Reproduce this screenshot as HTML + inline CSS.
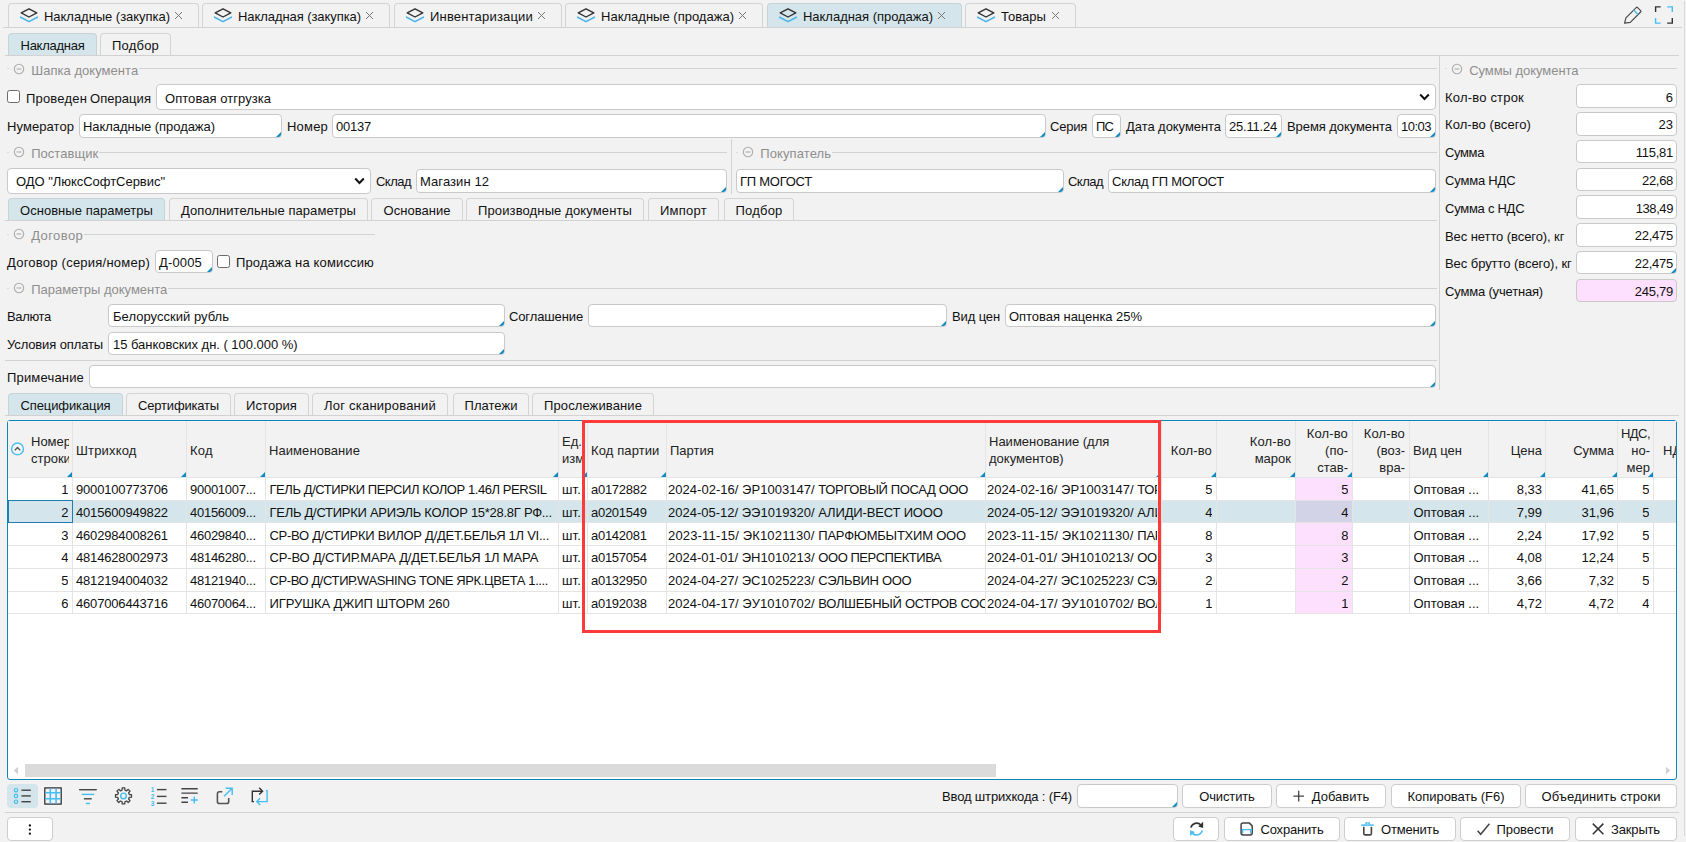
<!DOCTYPE html>
<html lang="ru"><head><meta charset="utf-8"><title>Накладная (продажа)</title>
<style>
*{box-sizing:border-box;margin:0;padding:0}
html,body{width:1686px;height:842px;overflow:hidden;background:#f2f2f2}
body{font-family:"Liberation Sans",sans-serif;font-size:13px;color:#111;position:relative}
.a{position:absolute;white-space:nowrap}
.t{position:absolute;white-space:nowrap;line-height:16px;height:16px}
.inp{position:absolute;background:#fff;border:1px solid #c9c9c9;border-radius:4px;height:23px;line-height:22px;padding-left:3px;padding-top:1px;white-space:nowrap;overflow:hidden}
.inp.r{text-align:right;padding-right:3px;padding-left:0}
.tri{position:absolute;width:0;height:0;border-left:5.5px solid transparent;border-bottom:5.5px solid #1089c1}
.tab{position:absolute;padding-top:1px;border:1px solid #d4d4d4;border-bottom:none;border-radius:4px 4px 0 0;height:23px;line-height:22px;text-align:center;white-space:nowrap;background:#f2f2f2}
.tab.on{background:#d4e6eb;border-color:#c9d3d6}
.hl{position:absolute;height:1px;background:#d2d2d2}
.vl{position:absolute;width:1px;background:#d2d2d2}
.cap{position:absolute;color:#8e8e8e;white-space:nowrap;line-height:16px;background:#f2f2f2;padding:0 1px}
.btn{position:absolute;background:#fff;border:1px solid #cdcdcd;border-radius:4px;height:23px;line-height:20px;text-align:center;white-space:nowrap}
.cb{position:absolute;width:13px;height:13px;border:1px solid #6b6b6b;border-radius:2.5px;background:#fff}
.gh{position:absolute;color:#222;line-height:17px;white-space:nowrap;overflow:hidden}
.gc{position:absolute;height:23px;line-height:22px;white-space:nowrap;overflow:hidden}
</style></head>
<body>
<div class="tab" style="left:8px;top:3px;width:191px;height:24px"></div>
<svg class="a" style="left:19px;top:7px" width="20" height="16" viewBox="0 0 20 16"><path d="M1.6 10.2 L10 14.6 L18.4 10.2" fill="none" stroke="#4db4e8" stroke-width="1.6" stroke-linejoin="round" stroke-linecap="round"></path><path d="M10 1.8 L17.8 5.9 L10 10 L2.2 5.9 Z" fill="none" stroke="#333" stroke-width="1.4" stroke-linejoin="round"></path></svg>
<div class="t" style="left:44px;top:9px"><span style="letter-spacing: -0.035px;">Накладные (закупка)</span></div>
<svg class="a" style="left:174px;top:11px" width="9" height="9" viewBox="0 0 9 9"><path d="M1 1L8 8M8 1L1 8" stroke="#777" stroke-width="1"></path></svg>
<div class="tab" style="left:202px;top:3px;width:188px;height:24px"></div>
<svg class="a" style="left:213px;top:7px" width="20" height="16" viewBox="0 0 20 16"><path d="M1.6 10.2 L10 14.6 L18.4 10.2" fill="none" stroke="#4db4e8" stroke-width="1.6" stroke-linejoin="round" stroke-linecap="round"></path><path d="M10 1.8 L17.8 5.9 L10 10 L2.2 5.9 Z" fill="none" stroke="#333" stroke-width="1.4" stroke-linejoin="round"></path></svg>
<div class="t" style="left:238px;top:9px"><span style="letter-spacing: -0.071px;">Накладная (закупка)</span></div>
<svg class="a" style="left:365px;top:11px" width="9" height="9" viewBox="0 0 9 9"><path d="M1 1L8 8M8 1L1 8" stroke="#777" stroke-width="1"></path></svg>
<div class="tab" style="left:394px;top:3px;width:168px;height:24px"></div>
<svg class="a" style="left:405px;top:7px" width="20" height="16" viewBox="0 0 20 16"><path d="M1.6 10.2 L10 14.6 L18.4 10.2" fill="none" stroke="#4db4e8" stroke-width="1.6" stroke-linejoin="round" stroke-linecap="round"></path><path d="M10 1.8 L17.8 5.9 L10 10 L2.2 5.9 Z" fill="none" stroke="#333" stroke-width="1.4" stroke-linejoin="round"></path></svg>
<div class="t" style="left:430px;top:9px"><span style="letter-spacing: 0.186px;">Инвентаризации</span></div>
<svg class="a" style="left:537px;top:11px" width="9" height="9" viewBox="0 0 9 9"><path d="M1 1L8 8M8 1L1 8" stroke="#777" stroke-width="1"></path></svg>
<div class="tab" style="left:565px;top:3px;width:198px;height:24px"></div>
<svg class="a" style="left:576px;top:7px" width="20" height="16" viewBox="0 0 20 16"><path d="M1.6 10.2 L10 14.6 L18.4 10.2" fill="none" stroke="#4db4e8" stroke-width="1.6" stroke-linejoin="round" stroke-linecap="round"></path><path d="M10 1.8 L17.8 5.9 L10 10 L2.2 5.9 Z" fill="none" stroke="#333" stroke-width="1.4" stroke-linejoin="round"></path></svg>
<div class="t" style="left:601px;top:9px"><span style="letter-spacing: 0.008px;">Накладные (продажа)</span></div>
<svg class="a" style="left:738px;top:11px" width="9" height="9" viewBox="0 0 9 9"><path d="M1 1L8 8M8 1L1 8" stroke="#777" stroke-width="1"></path></svg>
<div class="tab on" style="left:767px;top:3px;width:195px;height:24px"></div>
<svg class="a" style="left:778px;top:7px" width="20" height="16" viewBox="0 0 20 16"><path d="M1.6 10.2 L10 14.6 L18.4 10.2" fill="none" stroke="#4db4e8" stroke-width="1.6" stroke-linejoin="round" stroke-linecap="round"></path><path d="M10 1.8 L17.8 5.9 L10 10 L2.2 5.9 Z" fill="none" stroke="#333" stroke-width="1.4" stroke-linejoin="round"></path></svg>
<div class="t" style="left:803px;top:9px"><span style="letter-spacing: -0.028px;">Накладная (продажа)</span></div>
<svg class="a" style="left:937px;top:11px" width="9" height="9" viewBox="0 0 9 9"><path d="M1 1L8 8M8 1L1 8" stroke="#777" stroke-width="1"></path></svg>
<div class="tab" style="left:965px;top:3px;width:111px;height:24px"></div>
<svg class="a" style="left:976px;top:7px" width="20" height="16" viewBox="0 0 20 16"><path d="M1.6 10.2 L10 14.6 L18.4 10.2" fill="none" stroke="#4db4e8" stroke-width="1.6" stroke-linejoin="round" stroke-linecap="round"></path><path d="M10 1.8 L17.8 5.9 L10 10 L2.2 5.9 Z" fill="none" stroke="#333" stroke-width="1.4" stroke-linejoin="round"></path></svg>
<div class="t" style="left:1001px;top:9px"><span style="letter-spacing: 0.044px;">Товары</span></div>
<svg class="a" style="left:1051px;top:11px" width="9" height="9" viewBox="0 0 9 9"><path d="M1 1L8 8M8 1L1 8" stroke="#777" stroke-width="1"></path></svg>
<div class="hl" style="left:3px;top:27px;width:1679px;"></div>
<div class="vl" style="left:1684px;top:1px;height:835px;background:#d9d9d9"></div>
<div class="tab on" style="left:8px;top:33px;width:89px;height:23px;line-height:21px"><span style="letter-spacing: -0.257px;">Накладная</span></div>
<div class="tab" style="left:100px;top:33px;width:71px;height:23px;line-height:21px"><span style="letter-spacing: 0.203px;">Подбор</span></div>
<div class="hl" style="left:5px;top:55px;width:1674px;"></div>
<div class="hl" style="left:7px;top:68px;width:2px;background:#dcdcdc"></div>
<div class="hl" style="left:32px;top:68px;width:1405px;"></div>
<svg class="a" style="left:13.3px;top:63.2px" width="12" height="12" viewBox="0 0 12 12"><circle cx="6" cy="6" r="4.7" fill="none" stroke="#acacac" stroke-width="1.1"></circle><path d="M3.6 6h4.8" stroke="#acacac" stroke-width="1.1"></path></svg>
<div class="cap" style="left:30.2px;top:63px"><span style="letter-spacing: 0.041px;">Шапка документа</span></div>
<div class="cb" style="left:7px;top:90px"></div>
<div class="t" style="left:26px;top:91px;"><span style="letter-spacing: 0.186px;">Проведен</span></div>
<div class="t" style="left:90px;top:91px;"><span style="letter-spacing: 0.051px;">Операция</span></div>
<div class="inp" style="left:156px;top:84px;width:1280px;height:26px;line-height:26px;padding-left:8px"><span style="letter-spacing: 0.049px;">Оптовая отгрузка</span></div>
<svg class="a" style="left:1419px;top:93px" width="11" height="8" viewBox="0 0 11 8"><path d="M1.2 1.5L5.5 6L9.8 1.5" fill="none" stroke="#111" stroke-width="2"></path></svg>
<div class="t" style="left:7px;top:119px;"><span style="letter-spacing: 0.071px;">Нумератор</span></div>
<div class="inp" style="left:79px;top:114px;width:203px;height:24px;"><span style="letter-spacing: -0.044px;">Накладные (продажа)</span><i class="tri" style="right:0;bottom:0"></i></div>
<div class="t" style="left:287px;top:119px;"><span style="letter-spacing: 0.197px;">Номер</span></div>
<div class="inp" style="left:332px;top:114px;width:714px;height:24px;"><span style="letter-spacing: -0.231px;">00137</span><i class="tri" style="right:0;bottom:0"></i></div>
<div class="t" style="left:1050px;top:119px;"><span style="letter-spacing: -0.231px;">Серия</span></div>
<div class="inp" style="left:1092px;top:114px;width:29px;height:24px;"><span style="letter-spacing: -0.867px;">ПС</span><i class="tri" style="right:0;bottom:0"></i></div>
<div class="t" style="left:1126px;top:119px;"><span style="letter-spacing: -0.057px;">Дата документа</span></div>
<div class="inp" style="left:1225px;top:114px;width:57px;height:24px;"><span style="letter-spacing: -0.205px;">25.11.24</span><i class="tri" style="right:0;bottom:0"></i></div>
<div class="t" style="left:1287px;top:119px;"><span style="letter-spacing: -0.074px;">Время документа</span></div>
<div class="inp" style="left:1397px;top:114px;width:39px;height:24px;"><span style="letter-spacing: -0.509px;">10:03</span><i class="tri" style="right:0;bottom:0"></i></div>
<div class="hl" style="left:7px;top:152px;width:2px;background:#dcdcdc"></div>
<div class="hl" style="left:32px;top:152px;width:695px;"></div>
<svg class="a" style="left:13.3px;top:146.2px" width="12" height="12" viewBox="0 0 12 12"><circle cx="6" cy="6" r="4.7" fill="none" stroke="#acacac" stroke-width="1.1"></circle><path d="M3.6 6h4.8" stroke="#acacac" stroke-width="1.1"></path></svg>
<div class="cap" style="left:30.2px;top:146px"><span style="letter-spacing: 0.036px;">Поставщик</span></div>
<div class="vl" style="left:731px;top:139px;height:55px;"></div>
<div class="hl" style="left:736px;top:152px;width:2px;background:#dcdcdc"></div>
<div class="hl" style="left:761px;top:152px;width:676px;"></div>
<svg class="a" style="left:742.3px;top:146.2px" width="12" height="12" viewBox="0 0 12 12"><circle cx="6" cy="6" r="4.7" fill="none" stroke="#acacac" stroke-width="1.1"></circle><path d="M3.6 6h4.8" stroke="#acacac" stroke-width="1.1"></path></svg>
<div class="cap" style="left:759.2px;top:146px"><span style="letter-spacing: 0.114px;">Покупатель</span></div>
<div class="inp" style="left:7px;top:168px;width:364px;height:26px;line-height:23px;padding-left:8px"><span style="letter-spacing: -0.035px;">ОДО "ЛюксСофтСервис"</span></div>
<svg class="a" style="left:354px;top:177px" width="11" height="8" viewBox="0 0 11 8"><path d="M1.2 1.5L5.5 6L9.8 1.5" fill="none" stroke="#111" stroke-width="2"></path></svg>
<div class="t" style="left:376px;top:174px;"><span style="letter-spacing: -0.525px;">Склад</span></div>
<div class="inp" style="left:416px;top:169px;width:311px;height:24px;"><span style="letter-spacing: 0.078px;">Магазин 12</span><i class="tri" style="right:0;bottom:0"></i></div>
<div class="inp" style="left:736px;top:169px;width:328px;height:24px;"><span style="letter-spacing: -0.252px;">ГП МОГОСТ</span><i class="tri" style="right:0;bottom:0"></i></div>
<div class="t" style="left:1068px;top:174px;"><span style="letter-spacing: -0.525px;">Склад</span></div>
<div class="inp" style="left:1108px;top:169px;width:328px;height:24px;"><span style="letter-spacing: -0.233px;">Склад ГП МОГОСТ</span><i class="tri" style="right:0;bottom:0"></i></div>
<div class="tab on" style="left:8px;top:198px;width:157px;height:23px;line-height:21px"><span style="letter-spacing: 0.039px;">Основные параметры</span></div>
<div class="tab" style="left:169px;top:198px;width:199px;height:23px;line-height:21px"><span style="letter-spacing: 0.062px;">Дополнительные параметры</span></div>
<div class="tab" style="left:371px;top:198px;width:92px;height:23px;line-height:21px"><span style="letter-spacing: 0.035px;">Основание</span></div>
<div class="tab" style="left:466px;top:198px;width:178px;height:23px;line-height:21px"><span style="letter-spacing: 0.127px;">Производные документы</span></div>
<div class="tab" style="left:648px;top:198px;width:71px;height:23px;line-height:21px"><span style="letter-spacing: 0.258px;">Импорт</span></div>
<div class="tab" style="left:724px;top:198px;width:70px;height:23px;line-height:21px"><span style="letter-spacing: 0.203px;">Подбор</span></div>
<div class="hl" style="left:5px;top:220px;width:1432px;"></div>
<div class="hl" style="left:7px;top:234px;width:2px;background:#dcdcdc"></div>
<div class="hl" style="left:32px;top:234px;width:343px;"></div>
<svg class="a" style="left:13.3px;top:228.2px" width="12" height="12" viewBox="0 0 12 12"><circle cx="6" cy="6" r="4.7" fill="none" stroke="#acacac" stroke-width="1.1"></circle><path d="M3.6 6h4.8" stroke="#acacac" stroke-width="1.1"></path></svg>
<div class="cap" style="left:30.2px;top:228px"><span style="letter-spacing: 0.415px;">Договор</span></div>
<div class="t" style="left:7px;top:255px;"><span style="letter-spacing: 0.236px;">Договор (серия/номер)</span></div>
<div class="inp" style="left:155px;top:250px;width:58px;height:23px;"><span style="letter-spacing: 0.156px;">Д-0005</span><i class="tri" style="right:0;bottom:0"></i></div>
<div class="cb" style="left:217px;top:255px"></div>
<div class="t" style="left:236px;top:255px;"><span style="letter-spacing: 0.149px;">Продажа на комиссию</span></div>
<div class="hl" style="left:7px;top:288px;width:2px;background:#dcdcdc"></div>
<div class="hl" style="left:32px;top:288px;width:1405px;"></div>
<svg class="a" style="left:13.3px;top:282.2px" width="12" height="12" viewBox="0 0 12 12"><circle cx="6" cy="6" r="4.7" fill="none" stroke="#acacac" stroke-width="1.1"></circle><path d="M3.6 6h4.8" stroke="#acacac" stroke-width="1.1"></path></svg>
<div class="cap" style="left:30.2px;top:282px"><span style="letter-spacing: -0.016px;">Параметры документа</span></div>
<div class="t" style="left:7px;top:309px;"><span style="letter-spacing: -0.333px;">Валюта</span></div>
<div class="inp" style="left:108px;top:304px;width:397px;height:23px;padding-left:4px;"><span style="letter-spacing: 0.028px;">Белорусский рубль</span><i class="tri" style="right:0;bottom:0"></i></div>
<div class="t" style="left:509px;top:309px;"><span style="letter-spacing: -0.123px;">Соглашение</span></div>
<div class="inp" style="left:588px;top:304px;width:359px;height:23px;"><span></span><i class="tri" style="right:0;bottom:0"></i></div>
<div class="t" style="left:952px;top:309px;"><span style="letter-spacing: -0.121px;">Вид цен</span></div>
<div class="inp" style="left:1005px;top:304px;width:431px;height:23px;"><span style="letter-spacing: -0.042px;">Оптовая наценка 25%</span><i class="tri" style="right:0;bottom:0"></i></div>
<div class="t" style="left:7px;top:337px;"><span style="letter-spacing: -0.127px;">Условия оплаты</span></div>
<div class="inp" style="left:108px;top:332px;width:397px;height:23px;padding-left:4px;"><span style="letter-spacing: -0.031px;">15 банковских дн. ( 100.000 %)</span><i class="tri" style="right:0;bottom:0"></i></div>
<div class="hl" style="left:5px;top:360px;width:1432px;"></div>
<div class="t" style="left:7px;top:370px;"><span style="letter-spacing: 0.175px;">Примечание</span></div>
<div class="inp" style="left:89px;top:365px;width:1347px;height:23px;"><span></span><i class="tri" style="right:0;bottom:0"></i></div>
<div class="vl" style="left:1439px;top:56px;height:334px;"></div>
<div class="hl" style="left:1445px;top:68px;width:2px;background:#dcdcdc"></div>
<div class="hl" style="left:1470px;top:68px;width:207px;"></div>
<svg class="a" style="left:1451.3px;top:63.2px" width="12" height="12" viewBox="0 0 12 12"><circle cx="6" cy="6" r="4.7" fill="none" stroke="#acacac" stroke-width="1.1"></circle><path d="M3.6 6h4.8" stroke="#acacac" stroke-width="1.1"></path></svg>
<div class="cap" style="left:1468.2px;top:63px"><span style="letter-spacing: -0.045px;">Суммы документа</span></div>
<div class="t" style="left:1445px;top:90px"><span style="letter-spacing: 0.197px;">Кол-во строк</span></div>
<div class="inp r" style="left:1576px;top:84px;width:101px;height:24px;padding-top:2px;"><span>6</span></div>
<div class="t" style="left:1445px;top:117px"><span style="letter-spacing: 0.08px;">Кол-во (всего)</span></div>
<div class="inp r" style="left:1576px;top:112px;width:101px;height:24px;padding-top:1px;"><span>23</span></div>
<div class="t" style="left:1445px;top:145px"><span style="letter-spacing: -0.372px;">Сумма</span></div>
<div class="inp r" style="left:1576px;top:140px;width:101px;height:23px;padding-top:1px;"><span style="letter-spacing: -0.249px;">115,81</span></div>
<div class="t" style="left:1445px;top:173px"><span style="letter-spacing: -0.183px;">Сумма НДС</span></div>
<div class="inp r" style="left:1576px;top:168px;width:101px;height:23px;padding-top:1px;"><span style="letter-spacing: -0.309px;">22,68</span></div>
<div class="t" style="left:1445px;top:201px"><span style="letter-spacing: -0.26px;">Сумма с НДС</span></div>
<div class="inp r" style="left:1576px;top:195px;width:101px;height:24px;padding-top:2px;"><span style="letter-spacing: -0.411px;">138,49</span></div>
<div class="t" style="left:1445px;top:229px"><span style="letter-spacing: -0.081px;">Вес нетто (всего), кг</span></div>
<div class="inp r" style="left:1576px;top:223px;width:101px;height:24px;padding-top:1px;"><span style="letter-spacing: -0.244px;">22,475</span></div>
<div class="t" style="left:1445px;top:256px"><span style="letter-spacing: -0.061px;">Вес брутто (всего), кг</span></div>
<div class="inp r" style="left:1576px;top:251px;width:101px;height:23px;padding-top:1px;"><span style="letter-spacing: -0.244px;">22,475</span><i class="tri" style="right:0;bottom:0"></i></div>
<div class="t" style="left:1445px;top:284px"><span style="letter-spacing: -0.173px;">Сумма (учетная)</span></div>
<div class="inp r" style="left:1576px;top:279px;width:101px;height:23px;padding-top:1px;background:#fde0fd;"><span style="letter-spacing: -0.244px;">245,79</span></div>
<div class="tab on" style="left:8px;top:393px;width:115px;height:23px;line-height:21px"><span style="letter-spacing: -0.107px;">Спецификация</span></div>
<div class="tab" style="left:126px;top:393px;width:105px;height:23px;line-height:21px"><span style="letter-spacing: -0.178px;">Сертификаты</span></div>
<div class="tab" style="left:234px;top:393px;width:75px;height:23px;line-height:21px"><span style="letter-spacing: 0.083px;">История</span></div>
<div class="tab" style="left:312px;top:393px;width:136px;height:23px;line-height:21px"><span style="letter-spacing: 0.224px;">Лог сканирований</span></div>
<div class="tab" style="left:453px;top:393px;width:76px;height:23px;line-height:21px"><span style="letter-spacing: 0.038px;">Платежи</span></div>
<div class="tab" style="left:532px;top:393px;width:122px;height:23px;line-height:21px"><span style="letter-spacing: 0.108px;">Прослеживание</span></div>
<div class="hl" style="left:5px;top:415px;width:1674px;"></div>
<div class="a" style="left:7px;top:420px;width:1670px;height:360px;border:1px solid #0a86b8;border-radius:3px;background:#fff;overflow:hidden"></div>
<div class="a" style="left:8px;top:421px;width:1668px;height:57px;background:#f2f2f2"></div>
<div class="a" style="left:8px;top:501px;width:1668px;height:22px;background:#d4e6eb"></div>
<div class="a" style="left:1296px;top:478px;width:56px;height:22px;background:#fde0fd"></div>
<div class="a" style="left:1296px;top:501px;width:56px;height:21px;background:#d3d3e8"></div>
<div class="a" style="left:1296px;top:523px;width:56px;height:22px;background:#fde0fd"></div>
<div class="a" style="left:1296px;top:546px;width:56px;height:22px;background:#fde0fd"></div>
<div class="a" style="left:1296px;top:569px;width:56px;height:22px;background:#fde0fd"></div>
<div class="a" style="left:1296px;top:592px;width:56px;height:21px;background:#fde0fd"></div>
<div class="vl" style="left:72px;top:421px;height:193px;background:#e4e4e4"></div>
<div class="vl" style="left:186px;top:421px;height:193px;background:#e4e4e4"></div>
<div class="vl" style="left:265px;top:421px;height:193px;background:#e4e4e4"></div>
<div class="vl" style="left:558px;top:421px;height:193px;background:#e4e4e4"></div>
<div class="vl" style="left:587px;top:421px;height:193px;background:#e4e4e4"></div>
<div class="vl" style="left:666px;top:421px;height:193px;background:#e4e4e4"></div>
<div class="vl" style="left:985px;top:421px;height:193px;background:#e4e4e4"></div>
<div class="vl" style="left:1161px;top:421px;height:193px;background:#e4e4e4"></div>
<div class="vl" style="left:1216px;top:421px;height:193px;background:#e4e4e4"></div>
<div class="vl" style="left:1295px;top:421px;height:193px;background:#e4e4e4"></div>
<div class="vl" style="left:1352px;top:421px;height:193px;background:#e4e4e4"></div>
<div class="vl" style="left:1409px;top:421px;height:193px;background:#e4e4e4"></div>
<div class="vl" style="left:1488px;top:421px;height:193px;background:#e4e4e4"></div>
<div class="vl" style="left:1545px;top:421px;height:193px;background:#e4e4e4"></div>
<div class="vl" style="left:1617px;top:421px;height:193px;background:#e4e4e4"></div>
<div class="vl" style="left:1653px;top:421px;height:193px;background:#e4e4e4"></div>
<div class="hl" style="left:8px;top:477px;width:1668px;background:#e4e4e4"></div>
<div class="hl" style="left:8px;top:500px;width:1668px;background:#e4e4e4"></div>
<div class="hl" style="left:8px;top:522px;width:1668px;background:#e4e4e4"></div>
<div class="hl" style="left:8px;top:545px;width:1668px;background:#e4e4e4"></div>
<div class="hl" style="left:8px;top:568px;width:1668px;background:#e4e4e4"></div>
<div class="hl" style="left:8px;top:591px;width:1668px;background:#e4e4e4"></div>
<div class="hl" style="left:8px;top:613px;width:1668px;background:#e4e4e4"></div>
<div class="a" style="left:8px;top:500px;width:65px;height:23px;border:1px solid #1c7fb0"></div>
<div class="gh" style="left:31px;width:37.5px;text-align:left;top:433.0px;line-height:17px"><span>Номер</span><br><span>строки</span></div>
<div class="tri" style="left:67px;top:472px"></div>
<div class="gh" style="left:76px;width:110px;text-align:left;top:441.5px;line-height:17px"><span style="letter-spacing: 0.158px;">Штрихкод</span></div>
<div class="tri" style="left:181px;top:472px"></div>
<div class="gh" style="left:190px;width:75px;text-align:left;top:441.5px;line-height:17px"><span style="letter-spacing: 0.297px;">Код</span></div>
<div class="tri" style="left:260px;top:472px"></div>
<div class="gh" style="left:269px;width:289px;text-align:left;top:441.5px;line-height:17px"><span style="letter-spacing: 0.073px;">Наименование</span></div>
<div class="tri" style="left:553px;top:472px"></div>
<div class="gh" style="left:562px;width:21.5px;text-align:left;top:433.0px;line-height:17px"><span>Ед.</span><br><span>изм.</span></div>
<div class="tri" style="left:582px;top:472px"></div>
<div class="gh" style="left:591px;width:75px;text-align:left;top:441.5px;line-height:17px"><span style="letter-spacing: 0.109px;">Код партии</span></div>
<div class="tri" style="left:661px;top:472px"></div>
<div class="gh" style="left:670px;width:315px;text-align:left;top:441.5px;line-height:17px"><span>Партия</span></div>
<div class="tri" style="left:980px;top:472px"></div>
<div class="gh" style="left:989px;width:172px;text-align:left;top:433.0px;line-height:17px"><span>Наименование (для</span><br><span>документов)</span></div>
<div class="tri" style="left:1156px;top:472px"></div>
<div class="gh" style="left:1161px;width:51px;text-align:right;top:441.5px;line-height:17px"><span style="letter-spacing: 0.146px;">Кол-во</span></div>
<div class="tri" style="left:1211px;top:472px"></div>
<div class="gh" style="left:1216px;width:75px;text-align:right;top:433.0px;line-height:17px"><span style="letter-spacing: 0.146px;">Кол-во</span><br><span>марок</span></div>
<div class="tri" style="left:1290px;top:472px"></div>
<div class="gh" style="left:1295px;width:53px;text-align:right;top:424.5px;line-height:17px"><span style="letter-spacing: 0.146px;">Кол-во</span><br><span>(по-</span><br><span>став-</span></div>
<div class="tri" style="left:1347px;top:472px"></div>
<div class="gh" style="left:1352px;width:53px;text-align:right;top:424.5px;line-height:17px"><span style="letter-spacing: 0.146px;">Кол-во</span><br><span>(воз-</span><br><span>вра-</span></div>
<div class="gh" style="left:1413px;width:75px;text-align:left;top:441.5px;line-height:17px"><span>Вид цен</span></div>
<div class="tri" style="left:1483px;top:472px"></div>
<div class="gh" style="left:1488px;width:54px;text-align:right;top:441.5px;line-height:17px"><span>Цена</span></div>
<div class="tri" style="left:1540px;top:472px"></div>
<div class="gh" style="left:1545px;width:69px;text-align:right;top:441.5px;line-height:17px"><span>Сумма</span></div>
<div class="tri" style="left:1612px;top:472px"></div>
<div class="gh" style="left:1617px;width:33px;text-align:right;top:424.5px;line-height:17px"><span style="letter-spacing: -0.551px;">НДС,</span><br><span>но-</span><br><span>мер</span></div>
<div class="tri" style="left:1648px;top:472px"></div>
<div class="gh" style="left:1663px;width:12.5px;text-align:left;top:441.5px;line-height:17px"><span>НД</span></div>
<svg class="a" style="left:10px;top:441px" width="16" height="16" viewBox="0 0 16 16"><circle cx="7.5" cy="7.9" r="5.9" fill="#f3fafe" stroke="#56bdf0" stroke-width="1.5"></circle><path d="M4.8 9.2L7.5 6.5L10.2 9.2" fill="none" stroke="#555" stroke-width="1.5"></path></svg>
<div class="gc" style="left:8px;width:60.4px;text-align:right;top:478px;height:23px;line-height:24px"><span>1</span></div>
<div class="gc" style="left:76px;width:110px;top:478px;height:23px;line-height:24px"><span style="letter-spacing: -0.169px;">9000100773706</span></div>
<div class="gc" style="left:190px;width:75px;top:478px;height:23px;line-height:24px"><span style="letter-spacing: -0.263px;">90001007...</span></div>
<div class="gc" style="left:269.5px;width:288.5px;top:478px;height:23px;line-height:24px"><span style="letter-spacing: -0.427px;">ГЕЛЬ Д/СТИРКИ ПЕРСИЛ КОЛОР 1.46Л PERSIL</span></div>
<div class="gc" style="left:562px;width:25px;top:478px;height:23px;line-height:24px"><span style="letter-spacing: 0.146px;">шт.</span></div>
<div class="gc" style="left:591px;width:75px;top:478px;height:23px;line-height:24px"><span style="letter-spacing: -0.28px;">а0172882</span></div>
<div class="gc" style="left:668px;width:317px;top:478px;height:23px;line-height:24px"><span style="white-space: pre; letter-spacing: 0.031px;">2024-02-16/ ЭР1003147/ </span><span style="letter-spacing: -0.351px;">ТОРГОВЫЙ ПОСАД ООО</span></div>
<div class="gc" style="left:987px;width:170px;top:478px;height:23px;line-height:24px"><span style="white-space: pre; letter-spacing: 0.031px;">2024-02-16/ ЭР1003147/ </span><span style="letter-spacing: -0.351px;">ТОРГОВЫЙ ПОСАД ООО</span></div>
<div class="gc" style="left:1161px;width:51.4px;text-align:right;top:478px;height:23px;line-height:24px"><span>5</span></div>
<div class="gc" style="left:1295px;width:53.4px;text-align:right;top:478px;height:23px;line-height:24px"><span>5</span></div>
<div class="gc" style="left:1413.5px;width:74.5px;top:478px;height:23px;line-height:24px"><span>Оптовая ...</span></div>
<div class="gc" style="left:1488px;width:54px;text-align:right;top:478px;height:23px;line-height:24px"><span>8,33</span></div>
<div class="gc" style="left:1545px;width:69px;text-align:right;top:478px;height:23px;line-height:24px"><span>41,65</span></div>
<div class="gc" style="left:1617px;width:32.4px;text-align:right;top:478px;height:23px;line-height:24px"><span>5</span></div>
<div class="gc" style="left:8px;width:60.4px;text-align:right;top:501px;height:22px;line-height:23px"><span>2</span></div>
<div class="gc" style="left:76px;width:110px;top:501px;height:22px;line-height:23px"><span style="letter-spacing: -0.169px;">4015600949822</span></div>
<div class="gc" style="left:190px;width:75px;top:501px;height:22px;line-height:23px"><span style="letter-spacing: -0.263px;">40156009...</span></div>
<div class="gc" style="left:269.5px;width:288.5px;top:501px;height:22px;line-height:23px"><span style="letter-spacing: -0.275px;">ГЕЛЬ Д/СТИРКИ АРИЭЛЬ КОЛОР 15*28.8Г РФ...</span></div>
<div class="gc" style="left:562px;width:25px;top:501px;height:22px;line-height:23px"><span style="letter-spacing: 0.146px;">шт.</span></div>
<div class="gc" style="left:591px;width:75px;top:501px;height:22px;line-height:23px"><span style="letter-spacing: -0.28px;">а0201549</span></div>
<div class="gc" style="left:668px;width:317px;top:501px;height:22px;line-height:23px"><span style="white-space: pre; letter-spacing: 0.002px;">2024-05-12/ ЭЭ1019320/ </span><span style="letter-spacing: -0.163px;">АЛИДИ-ВЕСТ ИООО</span></div>
<div class="gc" style="left:987px;width:170px;top:501px;height:22px;line-height:23px"><span style="white-space: pre; letter-spacing: 0.002px;">2024-05-12/ ЭЭ1019320/ </span><span style="letter-spacing: -0.163px;">АЛИДИ-ВЕСТ ИООО</span></div>
<div class="gc" style="left:1161px;width:51.4px;text-align:right;top:501px;height:22px;line-height:23px"><span>4</span></div>
<div class="gc" style="left:1295px;width:53.4px;text-align:right;top:501px;height:22px;line-height:23px"><span>4</span></div>
<div class="gc" style="left:1413.5px;width:74.5px;top:501px;height:22px;line-height:23px"><span>Оптовая ...</span></div>
<div class="gc" style="left:1488px;width:54px;text-align:right;top:501px;height:22px;line-height:23px"><span>7,99</span></div>
<div class="gc" style="left:1545px;width:69px;text-align:right;top:501px;height:22px;line-height:23px"><span>31,96</span></div>
<div class="gc" style="left:1617px;width:32.4px;text-align:right;top:501px;height:22px;line-height:23px"><span>5</span></div>
<div class="gc" style="left:8px;width:60.4px;text-align:right;top:524px;height:23px;line-height:24px"><span>3</span></div>
<div class="gc" style="left:76px;width:110px;top:524px;height:23px;line-height:24px"><span style="letter-spacing: -0.169px;">4602984008261</span></div>
<div class="gc" style="left:190px;width:75px;top:524px;height:23px;line-height:24px"><span style="letter-spacing: -0.263px;">46029840...</span></div>
<div class="gc" style="left:269.5px;width:288.5px;top:524px;height:23px;line-height:24px"><span style="letter-spacing: -0.264px;">СР-ВО Д/СТИРКИ ВИЛОР Д/ДЕТ.БЕЛЬЯ 1Л VI...</span></div>
<div class="gc" style="left:562px;width:25px;top:524px;height:23px;line-height:24px"><span style="letter-spacing: 0.146px;">шт.</span></div>
<div class="gc" style="left:591px;width:75px;top:524px;height:23px;line-height:24px"><span style="letter-spacing: -0.28px;">а0142081</span></div>
<div class="gc" style="left:668px;width:317px;top:524px;height:23px;line-height:24px"><span style="white-space: pre; letter-spacing: 0.163px;">2023-11-15/ ЭК1021130/ </span><span style="letter-spacing: -0.229px;">ПАРФЮМБЫТХИМ ООО</span></div>
<div class="gc" style="left:987px;width:170px;top:524px;height:23px;line-height:24px"><span style="white-space: pre; letter-spacing: 0.163px;">2023-11-15/ ЭК1021130/ </span><span style="letter-spacing: -0.229px;">ПАРФЮМБЫТХИМ ООО</span></div>
<div class="gc" style="left:1161px;width:51.4px;text-align:right;top:524px;height:23px;line-height:24px"><span>8</span></div>
<div class="gc" style="left:1295px;width:53.4px;text-align:right;top:524px;height:23px;line-height:24px"><span>8</span></div>
<div class="gc" style="left:1413.5px;width:74.5px;top:524px;height:23px;line-height:24px"><span>Оптовая ...</span></div>
<div class="gc" style="left:1488px;width:54px;text-align:right;top:524px;height:23px;line-height:24px"><span>2,24</span></div>
<div class="gc" style="left:1545px;width:69px;text-align:right;top:524px;height:23px;line-height:24px"><span>17,92</span></div>
<div class="gc" style="left:1617px;width:32.4px;text-align:right;top:524px;height:23px;line-height:24px"><span>5</span></div>
<div class="gc" style="left:8px;width:60.4px;text-align:right;top:546px;height:23px;line-height:24px"><span>4</span></div>
<div class="gc" style="left:76px;width:110px;top:546px;height:23px;line-height:24px"><span style="letter-spacing: -0.169px;">4814628002973</span></div>
<div class="gc" style="left:190px;width:75px;top:546px;height:23px;line-height:24px"><span style="letter-spacing: -0.263px;">48146280...</span></div>
<div class="gc" style="left:269.5px;width:288.5px;top:546px;height:23px;line-height:24px"><span style="letter-spacing: -0.155px;">СР-ВО Д/СТИР.МАРА Д/ДЕТ.БЕЛЬЯ 1Л МАРА</span></div>
<div class="gc" style="left:562px;width:25px;top:546px;height:23px;line-height:24px"><span style="letter-spacing: 0.146px;">шт.</span></div>
<div class="gc" style="left:591px;width:75px;top:546px;height:23px;line-height:24px"><span style="letter-spacing: -0.28px;">а0157054</span></div>
<div class="gc" style="left:668px;width:317px;top:546px;height:23px;line-height:24px"><span style="white-space: pre; letter-spacing: 0px;">2024-01-01/ ЭН1010213/ </span><span style="letter-spacing: -0.445px;">ООО ПЕРСПЕКТИВА</span></div>
<div class="gc" style="left:987px;width:170px;top:546px;height:23px;line-height:24px"><span style="white-space: pre; letter-spacing: 0px;">2024-01-01/ ЭН1010213/ </span><span style="letter-spacing: -0.445px;">ООО ПЕРСПЕКТИВА</span></div>
<div class="gc" style="left:1161px;width:51.4px;text-align:right;top:546px;height:23px;line-height:24px"><span>3</span></div>
<div class="gc" style="left:1295px;width:53.4px;text-align:right;top:546px;height:23px;line-height:24px"><span>3</span></div>
<div class="gc" style="left:1413.5px;width:74.5px;top:546px;height:23px;line-height:24px"><span>Оптовая ...</span></div>
<div class="gc" style="left:1488px;width:54px;text-align:right;top:546px;height:23px;line-height:24px"><span>4,08</span></div>
<div class="gc" style="left:1545px;width:69px;text-align:right;top:546px;height:23px;line-height:24px"><span>12,24</span></div>
<div class="gc" style="left:1617px;width:32.4px;text-align:right;top:546px;height:23px;line-height:24px"><span>5</span></div>
<div class="gc" style="left:8px;width:60.4px;text-align:right;top:569px;height:23px;line-height:24px"><span>5</span></div>
<div class="gc" style="left:76px;width:110px;top:569px;height:23px;line-height:24px"><span style="letter-spacing: -0.169px;">4812194004032</span></div>
<div class="gc" style="left:190px;width:75px;top:569px;height:23px;line-height:24px"><span style="letter-spacing: -0.263px;">48121940...</span></div>
<div class="gc" style="left:269.5px;width:288.5px;top:569px;height:23px;line-height:24px"><span style="letter-spacing: -0.403px;">СР-ВО Д/СТИР.WASHING TONE ЯРК.ЦВЕТА 1....</span></div>
<div class="gc" style="left:562px;width:25px;top:569px;height:23px;line-height:24px"><span style="letter-spacing: 0.146px;">шт.</span></div>
<div class="gc" style="left:591px;width:75px;top:569px;height:23px;line-height:24px"><span style="letter-spacing: -0.28px;">а0132950</span></div>
<div class="gc" style="left:668px;width:317px;top:569px;height:23px;line-height:24px"><span style="white-space: pre; letter-spacing: 0px;">2024-04-27/ ЭС1025223/ </span><span style="letter-spacing: -0.325px;">СЭЛЬВИН ООО</span></div>
<div class="gc" style="left:987px;width:170px;top:569px;height:23px;line-height:24px"><span style="white-space: pre; letter-spacing: 0px;">2024-04-27/ ЭС1025223/ </span><span style="letter-spacing: -0.325px;">СЭЛЬВИН ООО</span></div>
<div class="gc" style="left:1161px;width:51.4px;text-align:right;top:569px;height:23px;line-height:24px"><span>2</span></div>
<div class="gc" style="left:1295px;width:53.4px;text-align:right;top:569px;height:23px;line-height:24px"><span>2</span></div>
<div class="gc" style="left:1413.5px;width:74.5px;top:569px;height:23px;line-height:24px"><span>Оптовая ...</span></div>
<div class="gc" style="left:1488px;width:54px;text-align:right;top:569px;height:23px;line-height:24px"><span>3,66</span></div>
<div class="gc" style="left:1545px;width:69px;text-align:right;top:569px;height:23px;line-height:24px"><span>7,32</span></div>
<div class="gc" style="left:1617px;width:32.4px;text-align:right;top:569px;height:23px;line-height:24px"><span>5</span></div>
<div class="gc" style="left:8px;width:60.4px;text-align:right;top:592px;height:22px;line-height:23px"><span>6</span></div>
<div class="gc" style="left:76px;width:110px;top:592px;height:22px;line-height:23px"><span style="letter-spacing: -0.169px;">4607006443716</span></div>
<div class="gc" style="left:190px;width:75px;top:592px;height:22px;line-height:23px"><span style="letter-spacing: -0.263px;">46070064...</span></div>
<div class="gc" style="left:269.5px;width:288.5px;top:592px;height:22px;line-height:23px"><span style="letter-spacing: -0.084px;">ИГРУШКА ДЖИП ШТОРМ 260</span></div>
<div class="gc" style="left:562px;width:25px;top:592px;height:22px;line-height:23px"><span style="letter-spacing: 0.146px;">шт.</span></div>
<div class="gc" style="left:591px;width:75px;top:592px;height:22px;line-height:23px"><span style="letter-spacing: -0.28px;">а0192038</span></div>
<div class="gc" style="left:668px;width:317px;top:592px;height:22px;line-height:23px"><span style="white-space: pre; letter-spacing: 0.049px;">2024-04-17/ ЭУ1010702/ </span><span style="letter-spacing: -0.312px;">ВОЛШЕБНЫЙ ОСТРОВ СООО</span></div>
<div class="gc" style="left:987px;width:170px;top:592px;height:22px;line-height:23px"><span style="white-space: pre; letter-spacing: 0.049px;">2024-04-17/ ЭУ1010702/ </span><span style="letter-spacing: -0.312px;">ВОЛШЕБНЫЙ ОСТРОВ СООО</span></div>
<div class="gc" style="left:1161px;width:51.4px;text-align:right;top:592px;height:22px;line-height:23px"><span>1</span></div>
<div class="gc" style="left:1295px;width:53.4px;text-align:right;top:592px;height:22px;line-height:23px"><span>1</span></div>
<div class="gc" style="left:1413.5px;width:74.5px;top:592px;height:22px;line-height:23px"><span>Оптовая ...</span></div>
<div class="gc" style="left:1488px;width:54px;text-align:right;top:592px;height:22px;line-height:23px"><span>4,72</span></div>
<div class="gc" style="left:1545px;width:69px;text-align:right;top:592px;height:22px;line-height:23px"><span>4,72</span></div>
<div class="gc" style="left:1617px;width:32.4px;text-align:right;top:592px;height:22px;line-height:23px"><span>4</span></div>
<div class="a" style="left:25px;top:764px;width:971px;height:13px;background:#dbdbdb"></div>
<svg class="a" style="left:13px;top:766px" width="6" height="9" viewBox="0 0 6 9"><path d="M5 0.8V8.2L0.8 4.5Z" fill="#d0d0d0"></path></svg>
<svg class="a" style="left:1665px;top:766px" width="6" height="9" viewBox="0 0 6 9"><path d="M1 0.8V8.2L5.2 4.5Z" fill="#d0d0d0"></path></svg>
<div class="a" style="left:582px;top:420px;width:579px;height:213px;border:3px solid #fc3a3a"></div>
<div class="a" style="left:7px;top:784px;width:31px;height:24px;background:#d4e6eb;border-radius:4px"></div>
<div class="t" style="left:942px;top:789px;"><span style="letter-spacing: -0.153px;">Ввод штрихкода : (F4)</span></div>
<div class="inp" style="left:1077px;top:784px;width:101px;height:24px;"><span></span><i class="tri" style="right:0;bottom:0"></i></div>
<div class="btn" style="left:1182px;top:784px;width:90px;height:24px;line-height:24px"><span style="letter-spacing: -0.137px;">Очистить</span></div>
<div class="btn" style="left:1276px;top:784px;width:110px;height:24px;line-height:24px"><span style="padding-left: 19px; letter-spacing: 0.006px;">Добавить</span></div>
<div class="btn" style="left:1391px;top:784px;width:130px;height:24px;line-height:24px"><span style="letter-spacing: -0.029px;">Копировать (F6)</span></div>
<div class="btn" style="left:1525px;top:784px;width:152px;height:24px;line-height:24px"><span style="letter-spacing: 0.077px;">Объединить строки</span></div>
<div class="hl" style="left:5px;top:812px;width:1674px;"></div>
<div class="btn" style="left:7px;top:817px;width:46px;height:24px;line-height:24px"></div>
<div class="btn" style="left:1173px;top:817px;width:46px;height:24px;line-height:24px"></div>
<div class="btn" style="left:1224px;top:817px;width:116px;height:24px;line-height:24px"><span style="padding-left: 20px; letter-spacing: -0.179px;">Сохранить</span></div>
<div class="btn" style="left:1344px;top:817px;width:112px;height:24px;line-height:24px"><span style="padding-left: 20px; letter-spacing: -0.176px;">Отменить</span></div>
<div class="btn" style="left:1460px;top:817px;width:110px;height:24px;line-height:24px"><span style="padding-left: 20px; letter-spacing: -0.064px;">Провести</span></div>
<div class="btn" style="left:1575px;top:817px;width:102px;height:24px;line-height:24px"><span style="padding-left: 19px; letter-spacing: -0.154px;">Закрыть</span></div>
<svg class="a" style="left:0;top:0;pointer-events:none" width="1686" height="842" viewBox="0 0 1686 842"><path d="M1624.6 23.2 L1625.9 17.9 L1636.2 7.6 Q1636.9 6.9 1637.6 7.6 L1640.6 10.6 Q1641.3 11.3 1640.6 12 L1630.3 22.3 Z" fill="none" stroke="#4a4a4a" stroke-width="1.2" stroke-linejoin="round"></path><path d="M1633.7 10.1 L1638.1 14.5" fill="none" stroke="#45bdf2" stroke-width="1.4"></path><path d="M1655.6 12 V6.9 H1660.7" fill="none" stroke="#333" stroke-width="1.4"></path><path d="M1667.2 23.1 H1672.3 V18" fill="none" stroke="#333" stroke-width="1.4"></path><path d="M1667.2 6.9 H1672.3 V12" fill="none" stroke="#45bdf2" stroke-width="1.4"></path><path d="M1655.6 18 V23.1 H1660.7" fill="none" stroke="#45bdf2" stroke-width="1.4"></path><circle cx="16" cy="790.2" r="1.7" fill="none" stroke="#45bdf2" stroke-width="1.2"></circle><path d="M21.4 790.2 H30.8" fill="none" stroke="#444" stroke-width="1.4"></path><circle cx="16" cy="795.9" r="1.7" fill="none" stroke="#45bdf2" stroke-width="1.2"></circle><path d="M21.4 795.9 H30.8" fill="none" stroke="#444" stroke-width="1.4"></path><circle cx="16" cy="801.7" r="1.7" fill="none" stroke="#45bdf2" stroke-width="1.2"></circle><path d="M21.4 801.7 H30.8" fill="none" stroke="#444" stroke-width="1.4"></path><rect x="43.6" y="786.7" width="18.8" height="18.6" fill="#fff"></rect><rect x="44.8" y="787.9" width="16.4" height="16.2" fill="#f2f2f2" stroke="#222" stroke-width="1.2"></rect><path d="M50.3 788.5 V803.5 M56.1 788.5 V803.5 M45.4 792.8 H60.6 M45.4 798.7 H60.6" fill="none" stroke="#45bdf2" stroke-width="1.6"></path><path d="M79.1 789.7 H96.8" fill="none" stroke="#444" stroke-width="1.4"></path><path d="M81.8 794.4 H94.3" fill="none" stroke="#45bdf2" stroke-width="1.4"></path><path d="M83.9 798.8 H91.7" fill="none" stroke="#444" stroke-width="1.4"></path><path d="M85.9 803.5 H90" fill="none" stroke="#45bdf2" stroke-width="1.4"></path><path d="M122.23 787.90 L124.77 787.90 L124.90 790.07 L126.63 790.78 L128.26 789.35 L130.05 791.14 L128.62 792.77 L129.33 794.50 L131.50 794.63 L131.50 797.17 L129.33 797.30 L128.62 799.03 L130.05 800.66 L128.26 802.45 L126.63 801.02 L124.90 801.73 L124.77 803.90 L122.23 803.90 L122.10 801.73 L120.37 801.02 L118.74 802.45 L116.95 800.66 L118.38 799.03 L117.67 797.30 L115.50 797.17 L115.50 794.63 L117.67 794.50 L118.38 792.77 L116.95 791.14 L118.74 789.35 L120.37 790.78 L122.10 790.07 Z" fill="none" stroke="#444" stroke-width="1.3" stroke-linejoin="round"></path><circle cx="123.5" cy="795.9" r="2.8" fill="none" stroke="#45bdf2" stroke-width="1.4"></circle><text x="152.6" y="792.0" font-family="Liberation Sans, sans-serif" font-size="6.5" font-weight="bold" fill="#45bdf2" text-anchor="middle">1</text><path d="M156.9 789.6 H166.5" fill="none" stroke="#444" stroke-width="1.4"></path><text x="152.6" y="798.8" font-family="Liberation Sans, sans-serif" font-size="6.5" font-weight="bold" fill="#45bdf2" text-anchor="middle">2</text><path d="M156.9 796.4 H166.5" fill="none" stroke="#444" stroke-width="1.4"></path><text x="152.6" y="805.6" font-family="Liberation Sans, sans-serif" font-size="6.5" font-weight="bold" fill="#45bdf2" text-anchor="middle">3</text><path d="M156.9 803.2 H166.5" fill="none" stroke="#444" stroke-width="1.4"></path><path d="M181.4 788.7 H197.7 M181.4 793.1 H197.7 M181.4 797.8 H188 M181.4 802.2 H188" fill="none" stroke="#444" stroke-width="1.4"></path><path d="M190.8 800 H197.8 M194.3 796.5 V803.5" fill="none" stroke="#45bdf2" stroke-width="1.4"></path><path d="M222.3 791.8 H219.5 Q217.4 791.8 217.4 793.9 V801.4 Q217.4 803.5 219.5 803.5 H226.6 Q228.7 803.5 228.7 801.4 V798" fill="none" stroke="#555" stroke-width="1.6"></path><path d="M224 796.2 L232 788.4 M225.6 788.3 H232.2 V794.9" fill="none" stroke="#45bdf2" stroke-width="1.4"></path><path d="M254 801.6 H252.3 V791.2 H262" fill="none" stroke="#333" stroke-width="1.4"></path><path d="M259.2 787.7 L262.6 791.2 L259.2 794.6" fill="none" stroke="#333" stroke-width="1.4"></path><path d="M265.9 790.6 H267.1 V801.6 H257.4" fill="none" stroke="#45bdf2" stroke-width="1.4"></path><path d="M260.1 798.2 L256.8 801.6 L260.1 804.9" fill="none" stroke="#45bdf2" stroke-width="1.4"></path><path d="M1293.4 796.1 H1304 M1298.7 790.8 V801.4" fill="none" stroke="#444" stroke-width="1.3"></path><circle cx="29.9" cy="825.5" r="1.15" fill="#111"></circle><circle cx="29.9" cy="829.6" r="1.15" fill="#111"></circle><circle cx="29.9" cy="833.7" r="1.15" fill="#111"></circle><path d="M1190.9 827.6 A6 6 0 0 1 1201 825" fill="none" stroke="#333" stroke-width="1.6"></path><path d="M1203.1 821.8 V827.9 L1198.2 826.5 Z" fill="#333"></path><path d="M1202.3 830.4 A6 6 0 0 1 1192.4 833.4" fill="none" stroke="#45bdf2" stroke-width="1.6"></path><path d="M1190.1 830.3 V836 L1194.9 832 Z" fill="#45bdf2"></path><path d="M1243 822.9 H1249.2 L1252.2 825.9 V833 Q1252.2 834.9 1250.3 834.9 H1243 Q1241.1 834.9 1241.1 833 V824.8 Q1241.1 822.9 1243 822.9 Z" fill="none" stroke="#444" stroke-width="1.5" stroke-linejoin="round"></path><path d="M1242.6 833.6 V829.6 H1250.7 V833.6" fill="none" stroke="#45bdf2" stroke-width="1.4"></path><path d="M1361.2 825.1 H1373.8" fill="none" stroke="#45bdf2" stroke-width="1.5"></path><path d="M1365.9 824.6 V822.8 H1369.2 V824.6" fill="none" stroke="#45bdf2" stroke-width="1.3"></path><path d="M1363.8 826.8 V833.4 Q1363.8 834.9 1365.3 834.9 H1369.9 Q1371.4 834.9 1371.4 833.4 V826.8" fill="none" stroke="#444" stroke-width="1.6"></path><path d="M1477.6 830.8 L1480.7 834.3 L1489.4 823.7" fill="none" stroke="#444" stroke-width="1.5"></path><path d="M1592.8 823.6 L1603.4 834.2 M1603.4 823.6 L1592.8 834.2" fill="none" stroke="#333" stroke-width="1.5"></path></svg>

</body></html>
